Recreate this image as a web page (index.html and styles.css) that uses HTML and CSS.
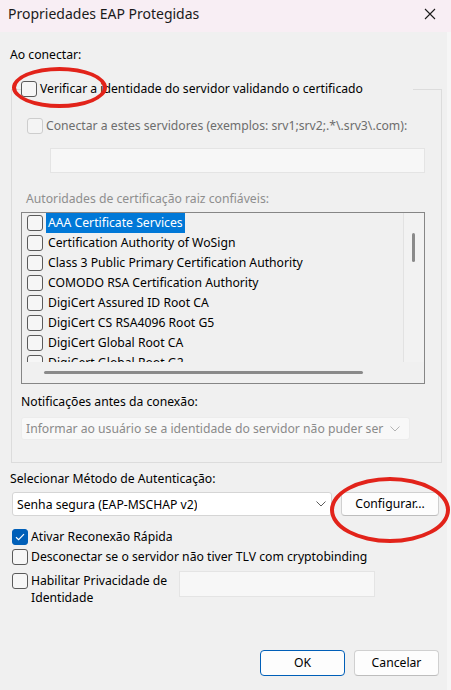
FILE: index.html
```html
<!DOCTYPE html>
<html lang="pt-BR">
<head>
<meta charset="utf-8">
<title>Propriedades EAP Protegidas</title>
<link rel="stylesheet" href="styles.css">
</head>
<body>
<div class="window">
  <div class="titlebar">
    <span class="title">Propriedades EAP Protegidas</span>
    <svg class="close" width="12" height="12" viewBox="0 0 12 12"><path d="M1 1L11 11M11 1L1 11" stroke="#1a1a1a" stroke-width="1.1" fill="none"/></svg>
  </div>
  <div class="main">
    <div class="content">
      <div class="label ao">Ao conectar:</div>
      <fieldset class="group">
        <legend class="legend"><span class="chk"></span><span class="txt">Verificar a identidade do servidor validando o certificado</span></legend>
        <div class="chkrow srv disabled"><span class="chk dis"></span><span class="txt">Conectar a estes servidores (exemplos: srv1;srv2;.*\.srv3\.com):</span></div>
        <div class="field srvfield"></div>
        <div class="label auth">Autoridades de certificação raiz confiáveis:</div>
        <div class="list">
          <div class="items">
            <div class="item"><span class="chk"></span><span class="itxt sel">AAA Certificate Services</span></div>
            <div class="item"><span class="chk"></span><span class="itxt">Certification Authority of WoSign</span></div>
            <div class="item"><span class="chk"></span><span class="itxt">Class 3 Public Primary Certification Authority</span></div>
            <div class="item"><span class="chk"></span><span class="itxt">COMODO RSA Certification Authority</span></div>
            <div class="item"><span class="chk"></span><span class="itxt">DigiCert Assured ID Root CA</span></div>
            <div class="item"><span class="chk"></span><span class="itxt">DigiCert CS RSA4096 Root G5</span></div>
            <div class="item"><span class="chk"></span><span class="itxt">DigiCert Global Root CA</span></div>
            <div class="item"><span class="chk"></span><span class="itxt">DigiCert Global Root G2</span></div>
          </div>
          <div class="vscroll"><span class="vthumb"></span></div>
          <div class="hscroll"><span class="hthumb"></span></div>
          <div class="corner"></div>
        </div>
        <div class="label notif">Notificações antes da conexão:</div>
        <div class="combo dcombo">
          <span class="ctext">Informar ao usuário se a identidade do servidor não puder ser verificada</span>
          <svg class="chev" width="10" height="6" viewBox="0 0 10 6"><path d="M0.5 0.5L5 5L9.5 0.5" stroke="#b4b4b4" fill="none"/></svg>
        </div>
      </fieldset>
      <div class="label selm">Selecionar Método de Autenticação:</div>
      <div class="method">
        <div class="combo mcombo">
          <span class="ctext">Senha segura (EAP-MSCHAP v2)</span>
          <svg class="chev" width="10" height="6" viewBox="0 0 10 6"><path d="M0.5 0.5L5 5L9.5 0.5" stroke="#5c5c5c" fill="none"/></svg>
        </div>
        <button class="btn cfg">Configurar...</button>
      </div>
      <div class="chkrow ativar"><span class="chk on"><svg width="10" height="8" viewBox="0 0 10 8"><path d="M1 4.2L3.6 6.6L9 1.2" stroke="#fff" stroke-width="1.2" fill="none"/></svg></span><span class="txt">Ativar Reconexão Rápida</span></div>
      <div class="chkrow desc"><span class="chk"></span><span class="txt">Desconectar se o servidor não tiver TLV com cryptobinding</span></div>
      <div class="privrow">
        <div class="chkrow priv"><span class="chk"></span><span class="txt">Habilitar Privacidade de Identidade</span></div>
        <div class="field privfield"></div>
      </div>
      <div class="actions">
        <button class="btn ok">OK</button>
        <button class="btn">Cancelar</button>
      </div>
    </div>
    <div class="edge"></div>
  </div>
  <div class="ring ring1"></div>
  <div class="ring ring2"></div>
</div>
</body>
</html>
```
FILE: styles.css
```css
* { box-sizing: border-box; }
html, body { margin: 0; padding: 0; }
body {
  width: 451px;
  height: 690px;
  overflow: hidden;
  background: #f0f0f0;
  font-family: "Noto Sans", "Open Sans", sans-serif;
  font-size: 12.2px;
  color: #000;
}
.window {
  position: relative;
  width: 451px;
  height: 690px;
  display: flex;
  flex-direction: column;
}
.titlebar {
  height: 32px;
  flex: none;
  background: #f8eef4;
  display: flex;
  align-items: center;
  justify-content: space-between;
  padding: 0 15px 0 8px;
}
.title {
  font-size: 14px;
  color: #1a1a1a;
  line-height: 18px;
  margin-top: -4px;
}
.close { margin-top: -4px; }
.main {
  flex: 1;
  display: flex;
}
.content {
  width: 447px;
  display: flex;
  flex-direction: column;
  padding: 0 8px 14px 0;
}
.edge {
  width: 4px;
  background: #f6f6f6;
}
.label { line-height: 16px; }
.ao { margin: 15px 0 0 10px; }
.group {
  margin: 18px 0 0 11px;
  width: 431px;
  padding: 0 0 22px 0;
  border: 1px solid #dcdcdc;
  min-width: 0;
}
.legend {
  margin-left: 9px;
  width: 392px;
  padding: 0;
  display: flex;
  align-items: center;
  gap: 3px;
  height: 16px;
  line-height: 16px;
}
.chk {
  width: 16px;
  height: 16px;
  flex: none;
  border: 1px solid #5a5a5a;
  border-radius: 3px;
  background: #f6f6f6;
  display: inline-flex;
  align-items: center;
  justify-content: center;
}
.chk.dis {
  border-color: #cdcdcd;
  background: #f4f4f4;
}
.chk.on {
  background: #005fb8;
  border-color: #005fb8;
}
.chkrow {
  display: flex;
  align-items: center;
  gap: 3px;
  line-height: 16px;
}
.srv { margin: 21px 0 0 15px; color: #6d6d6d; }
.field {
  background: #f7f7f7;
  border: 1px solid #e4e4e4;
}
.srvfield {
  margin: 14px 0 0 38px;
  width: 375px;
  height: 25px;
}
.auth { margin: 18px 0 0 14px; color: #8e8e8e; }
.list {
  margin: 5px 0 0 9px;
  width: 404px;
  height: 172px;
  border: 1px solid #868686;
  display: grid;
  grid-template-columns: 1fr 21px;
  grid-template-rows: 1fr 21px;
  background: #f0f0f0;
}
.items {
  overflow: hidden;
  padding-left: 5px;
}
.item {
  height: 20px;
  display: flex;
  align-items: center;
  gap: 3px;
}
.itxt {
  line-height: 20px;
  padding: 0 2px;
}
.itxt.sel {
  background: #0078d7;
  color: #fff;
}
.vscroll {
  border-left: 1px solid #e2e2e2;
  background: #f2f2f2;
  padding: 20px 0 0 8px;
}
.vthumb {
  display: block;
  width: 3px;
  height: 29px;
  border-radius: 2px;
  background: #8a8a8a;
}
.hscroll {
  background: #f0f0f0;
  padding: 9px 0 0 22px;
}
.hthumb {
  display: block;
  width: 319px;
  height: 3px;
  border-radius: 2px;
  background: #8a8a8a;
}
.corner { background: #f0f0f0; }
.notif { margin: 10px 0 0 9px; }
.combo {
  display: flex;
  align-items: center;
  justify-content: space-between;
  border-radius: 3px;
}
.ctext {
  white-space: nowrap;
  overflow: hidden;
}
.dcombo {
  margin: 7px 0 0 9px;
  width: 389px;
  height: 23px;
  background: #f8f8f8;
  border: 1px solid #ececec;
  padding: 0 9px 0 4px;
  color: #8a8a8a;
}
.dcombo .ctext { width: 360px; }
.selm { margin: 8px 0 0 10px; }
.method {
  margin: 5px 0 0 12px;
  display: flex;
  gap: 9px;
  height: 24px;
}
.mcombo {
  width: 320px;
  background: #fff;
  border: 1px solid #d5d5d5;
  padding: 0 5px 0 4px;
}
.btn {
  font-family: inherit;
  font-size: 12.2px;
  color: #000;
  background: #fdfdfd;
  border: 1px solid #d0d0d0;
  border-bottom-color: #bdbdbd;
  border-radius: 4px;
  padding: 0;
  line-height: 16px;
}
.cfg { width: 98px; }
.ativar { margin: 13px 0 0 12px; }
.desc { margin: 4px 0 0 12px; }
.privrow {
  margin: 6px 0 0 12px;
  display: flex;
  align-items: flex-start;
}
.priv {
  width: 167px;
  align-items: flex-start;
  padding-top: 2px;
}
.priv .txt { width: 140px; line-height: 17px; margin-top: -1px; }
.privfield {
  width: 196px;
  height: 26px;
}
.actions {
  margin-top: auto;
  display: flex;
  justify-content: flex-end;
  gap: 9px;
}
.actions .btn {
  width: 85px;
  height: 26px;
}
.btn.ok {
  border: 1px solid #005fb8;
}
.ring {
  position: absolute;
  border: 4px solid #e2231a;
  border-radius: 50%;
  pointer-events: none;
}
.ring1 { left: 12px; top: 67px; width: 95px; height: 41px; }
.ring2 { left: 330px; top: 477px; width: 120px; height: 66px; }
```
